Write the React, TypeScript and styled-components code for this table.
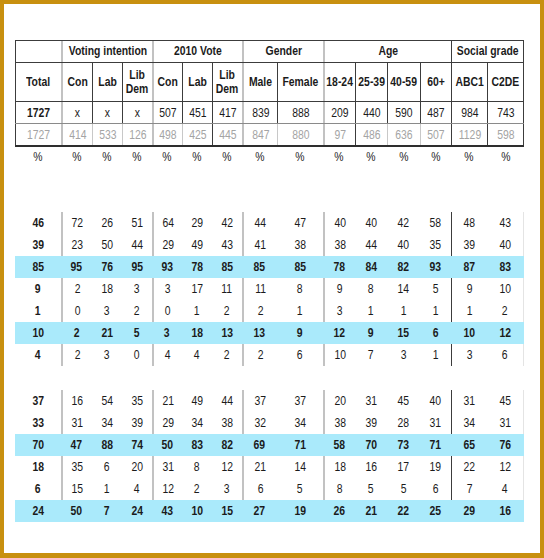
import React from "react";
import styled, { createGlobalStyle } from "styled-components";

// column widths of the spreadsheet, left to right
const COLS = [46, 31, 30, 30, 30, 30, 30, 35, 46, 32, 32, 33, 31, 36, 37];
const TEMPLATE = COLS.map((w) => `${w}px`).join(" ");

type Line = "dark" | "light" | "soft" | "none";

const LINES: Record<Line, string> = {
  dark: "1px solid #3c3c3c",
  light: "2px solid #c2c2c2",
  soft: "1px solid #c8c8c8",
  none: "0",
};

// vertical rules on the left edge of each column
const HEAD_LINES: Line[] = ["dark", "light", "dark", "dark", "light", "dark", "dark", "light", "dark", "light", "dark", "dark", "dark", "dark", "dark"];
const GREY_LINES: Line[] = ["dark", "light", "soft", "soft", "light", "soft", "dark", "light", "soft", "light", "dark", "soft", "soft", "dark", "dark"];
const DATA_LINES: Line[] = ["none", "light", "none", "none", "light", "none", "none", "light", "none", "light", "none", "none", "none", "dark", "none"];

const GROUPS = [
  { label: "", span: 1, line: "dark" as Line },
  { label: "Voting intention", span: 3, line: "light" as Line },
  { label: "2010 Vote", span: 3, line: "light" as Line },
  { label: "Gender", span: 2, line: "light" as Line },
  { label: "Age", span: 4, line: "light" as Line },
  { label: "Social grade", span: 2, line: "dark" as Line },
];

const SUBHEADS = ["Total", "Con", "Lab", "Lib Dem", "Con", "Lab", "Lib Dem", "Male", "Female", "18-24", "25-39", "40-59", "60+", "ABC1", "C2DE"];
const WEIGHTED = ["1727", "x", "x", "x", "507", "451", "417", "839", "888", "209", "440", "590", "487", "984", "743"];
const UNWEIGHTED = ["1727", "414", "533", "126", "498", "425", "445", "847", "880", "97", "486", "636", "507", "1129", "598"];

type DataRow = { values: number[]; band?: boolean };

const SECTION_ONE: DataRow[] = [
  { values: [46, 72, 26, 51, 64, 29, 42, 44, 47, 40, 40, 42, 58, 48, 43] },
  { values: [39, 23, 50, 44, 29, 49, 43, 41, 38, 38, 44, 40, 35, 39, 40] },
  { values: [85, 95, 76, 95, 93, 78, 85, 85, 85, 78, 84, 82, 93, 87, 83], band: true },
  { values: [9, 2, 18, 3, 3, 17, 11, 11, 8, 9, 8, 14, 5, 9, 10] },
  { values: [1, 0, 3, 2, 0, 1, 2, 2, 1, 3, 1, 1, 1, 1, 2] },
  { values: [10, 2, 21, 5, 3, 18, 13, 13, 9, 12, 9, 15, 6, 10, 12], band: true },
  { values: [4, 2, 3, 0, 4, 4, 2, 2, 6, 10, 7, 3, 1, 3, 6] },
];

const SECTION_TWO: DataRow[] = [
  { values: [37, 16, 54, 35, 21, 49, 44, 37, 37, 20, 31, 45, 40, 31, 45] },
  { values: [33, 31, 34, 39, 29, 34, 38, 32, 34, 38, 39, 28, 31, 34, 31] },
  { values: [70, 47, 88, 74, 50, 83, 82, 69, 71, 58, 70, 73, 71, 65, 76], band: true },
  { values: [18, 35, 6, 20, 31, 8, 12, 21, 14, 18, 16, 17, 19, 22, 12] },
  { values: [6, 15, 1, 4, 12, 2, 3, 6, 5, 8, 5, 5, 6, 7, 4] },
  { values: [24, 50, 7, 24, 43, 10, 15, 27, 19, 26, 21, 22, 25, 29, 16], band: true },
];

const GlobalStyle = createGlobalStyle`
  body {
    margin: 0;
    background: #ffffff;
    font-family: "Liberation Sans", Arial, sans-serif;
    color: #1b1b1b;
  }
`;

const Frame = styled.div`
  width: 544px;
  height: 558px;
  box-sizing: border-box;
  border: 4px solid #c8900f;
  border-bottom-width: 5px;
  background: #ffffff;
  padding: 36px 0 0 11px;
`;

const Sheet = styled.div`
  width: 509px;
  display: flex;
  flex-direction: column;
`;

const Row = styled.div<{ $h: number; $top?: string; $bottom?: string; $band?: boolean }>`
  display: grid;
  grid-template-columns: ${TEMPLATE};
  height: ${(p) => p.$h}px;
  box-sizing: border-box;
  border-top: ${(p) => p.$top || "0"};
  border-bottom: ${(p) => p.$bottom || "0"};
  background: ${(p) => (p.$band ? "#aaeafb" : "transparent")};
`;

const Cell = styled.div<{ $line: Line; $span?: number; $bold?: boolean; $muted?: boolean; $edge?: string }>`
  grid-column: span ${(p) => p.$span || 1};
  display: flex;
  align-items: center;
  justify-content: center;
  text-align: center;
  box-sizing: border-box;
  border-left: ${(p) => LINES[p.$line]};
  border-right: ${(p) => p.$edge || "0"};
  font-size: 13px;
  line-height: 14px;
  font-weight: ${(p) => (p.$bold ? 700 : 400)};
  color: ${(p) => (p.$muted ? "#a4a4a4" : "#1b1b1b")};
`;

const HeadCell = styled(Cell)`
  font-size: 13px;
  line-height: 14.5px;
  font-weight: 700;
`;

// the sheet is set in a narrow face; squeeze Liberation Sans to match
const Narrow = styled.span`
  display: inline-block;
  white-space: nowrap;
  transform: scaleX(0.8);
`;

const Gap = styled.div<{ $h: number }>`
  height: ${(p) => p.$h}px;
`;

const EDGE_DARK = "1px solid #3c3c3c";
const EDGE_FAINT = "1px solid #e4e4e4";

function Section({ rows }: { rows: DataRow[] }) {
  return (
    <>
      {rows.map((row, r) => (
        <Row key={r} $h={22} $band={row.band}>
          {row.values.map((v, i) => (
            <Cell
              key={i}
              $line={row.band ? "none" : DATA_LINES[i]}
              $bold={row.band || i === 0}
              $edge={!row.band && i === COLS.length - 1 ? EDGE_FAINT : undefined}
            >
              <Narrow>{v}</Narrow>
            </Cell>
          ))}
        </Row>
      ))}
    </>
  );
}

export default function App() {
  const last = COLS.length - 1;
  return (
    <Frame>
      <GlobalStyle />
      <Sheet>
        <Row $h={22} $top={EDGE_DARK}>
          {GROUPS.map((g, i) => (
            <HeadCell key={i} $line={g.line} $span={g.span} $edge={i === GROUPS.length - 1 ? EDGE_DARK : undefined}>
              <Narrow>{g.label}</Narrow>
            </HeadCell>
          ))}
        </Row>
        <Row $h={39} $top={EDGE_DARK}>
          {SUBHEADS.map((s, i) => (
            <HeadCell key={i} $line={HEAD_LINES[i]} $edge={i === last ? EDGE_DARK : undefined}>
              {s === "Lib Dem" ? (
                <Narrow>
                  Lib
                  <br />
                  Dem
                </Narrow>
              ) : (
                <Narrow>{s}</Narrow>
              )}
            </HeadCell>
          ))}
        </Row>
        <Row $h={22} $top={EDGE_DARK}>
          {WEIGHTED.map((s, i) => (
            <Cell key={i} $line={HEAD_LINES[i]} $bold={i === 0} $edge={i === last ? EDGE_DARK : undefined}>
              <Narrow>{s}</Narrow>
            </Cell>
          ))}
        </Row>
        <Row $h={24} $top="1px solid #8a8a8a" $bottom="2px solid #2e2e2e">
          {UNWEIGHTED.map((s, i) => (
            <Cell key={i} $line={GREY_LINES[i]} $muted $edge={i === last ? EDGE_DARK : undefined}>
              <Narrow>{s}</Narrow>
            </Cell>
          ))}
        </Row>
        <Row $h={20}>
          {COLS.map((_, i) => (
            <Cell key={i} $line="none">
              <Narrow>%</Narrow>
            </Cell>
          ))}
        </Row>
        <Gap $h={45} />
        <Section rows={SECTION_ONE} />
        <Gap $h={24} />
        <Section rows={SECTION_TWO} />
      </Sheet>
    </Frame>
  );
}
